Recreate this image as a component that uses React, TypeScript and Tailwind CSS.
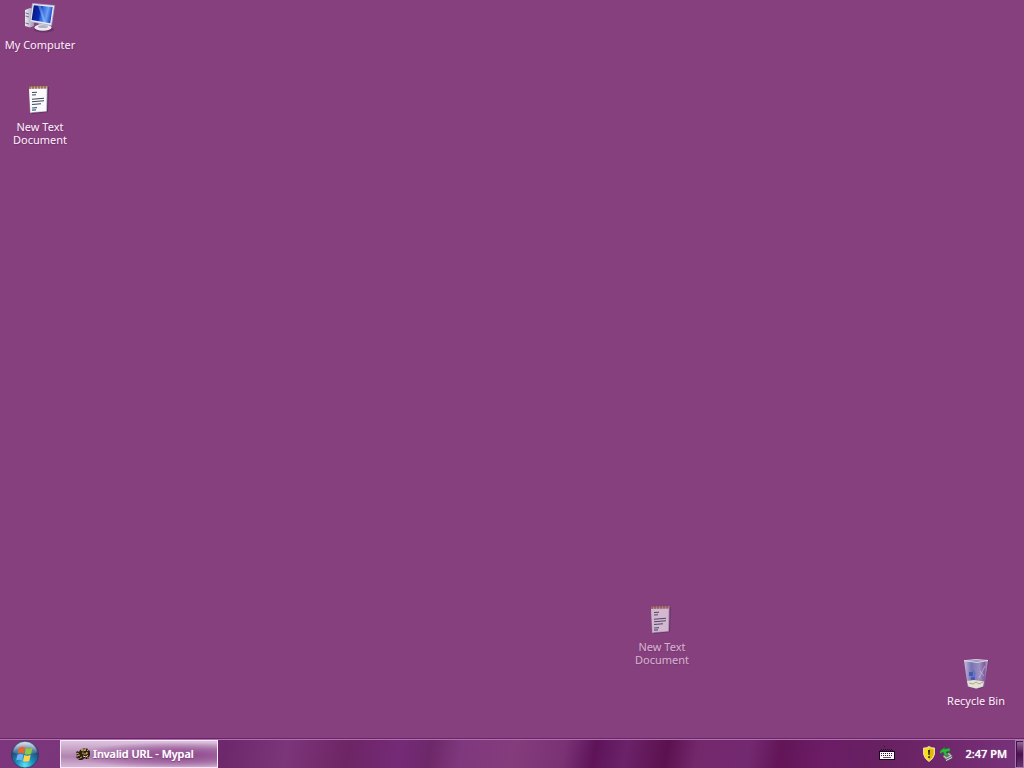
import type { ReactNode } from 'react';

function ComputerIcon() {
  return (
    <svg viewBox="0 0 32 32" className="h-8 w-8" aria-hidden="true">
      <defs>
        <linearGradient id="pcScreen" x1="0" y1="0" x2="1" y2="0.2">
          <stop offset="0" stopColor="#061272" />
          <stop offset="0.45" stopColor="#0a2bb4" />
          <stop offset="0.55" stopColor="#2f68dc" />
          <stop offset="0.8" stopColor="#6ca0f2" />
          <stop offset="1" stopColor="#2450c8" />
        </linearGradient>
        <linearGradient id="pcCase" x1="0" y1="0" x2="1" y2="0">
          <stop offset="0" stopColor="#ebe8f2" />
          <stop offset="1" stopColor="#9f98b0" />
        </linearGradient>
      </defs>
      <path d="M1 8 6 6 10 7V24L6 25.5 1 24Z" fill="url(#pcCase)" />
      <path d="M1.5 11 5 12M1.5 14 5 15M1.5 21 5 22" stroke="#77708c" strokeWidth="1" />
      <ellipse cx="20" cy="27.5" rx="10" ry="3" fill="#4b2454" opacity="0.5" />
      <path d="m15 20 8 2-1 4-8-2Z" fill="#a9a7b9" />
      <ellipse cx="19" cy="25.5" rx="8.5" ry="3.3" fill="#eceaf1" />
      <ellipse cx="19" cy="24.5" rx="5" ry="1.5" fill="#b3b1c1" />
      <path d="M8.500 1.500 30.500 3.500 27.500 23.500 6 19.500Z" fill="#e9ecf6" stroke="#aaa9c2" strokeWidth="0.7" />
      <path d="m9.800 3.200 18.900 1.900-2.500 16.200L7.600 18Z" fill="url(#pcScreen)" />
      <path d="m14 3.700 3 .3 4.500 16.200-2-.3Z" fill="#a9caff" opacity="0.45" />
    </svg>
  );
}

function NotepadIcon() {
  return (
    <svg viewBox="0 0 32 32" className="h-8 w-8" aria-hidden="true">
      <path d="m7 4 18-1-1 25-16 2Z" fill="#451f4c" opacity="0.55" />
      <path d="m5 3 18.500-.5L23 27.500 6 29Z" fill="#bab6c6" />
      <path d="M5 3.500 22.700 3.200l-.7 23.900L6.500 28.300Z" fill="#fbfafe" />
      <path d="m5 2.500 18-.2v2.200L5 4.700Z" fill="#c7a078" />
      <path d="M6 1v4M9 .9v4M12 .8v4M15 .8v4M18 .7v4M21 .7v4" stroke="#7b4b42" strokeWidth="1" />
      <path d="m8 8.500 5-.2M8 11l4-.2M8 15.200l12-1M8 17.800l12-1M8 20.500l9-.8" stroke="#3e4854" strokeWidth="1.1" />
      <path d="m8 24 5-.4M8 26.200l4-.3" stroke="#3c6078" strokeWidth="1.2" />
    </svg>
  );
}

function BinIcon() {
  return (
    <svg viewBox="0 0 32 32" className="h-8 w-8" aria-hidden="true">
      <defs>
        <linearGradient id="binGlass" x1="0" y1="0" x2="1" y2="0">
          <stop offset="0" stopColor="#c8c0e0" />
          <stop offset="0.3" stopColor="#7673b2" />
          <stop offset="0.65" stopColor="#9c8fc2" />
          <stop offset="0.85" stopColor="#805f9c" />
          <stop offset="1" stopColor="#bda8cf" />
        </linearGradient>
      </defs>
      <path d="m5 3 24-1-5 27-4 2-8-1Z" fill="#4a2855" opacity="0.4" />
      <path d="M4 2.500 16 1.500l12 .8L24.400 28.500l-7.900 2.200-8.800-2.200Z" fill="url(#binGlass)" />
      <path d="m7 23 7-1 10 1.500-1 5-7 2-7.500-2Z" fill="#e5e1d6" />
      <path d="m9 25 4 1 3-2 3 2 4-2" stroke="#b6a67a" fill="none" />
      <path d="M9 14h4v4H9ZM11 19h4v3h-4Z" fill="#3450b8" opacity="0.8" />
      <path d="m13 12 2 4-2 4" stroke="#4869ca" strokeWidth="1.3" fill="none" opacity="0.7" />
      <path d="m25 8-6 12M20 13l4 5" stroke="#e2d7f2" strokeWidth="0.9" fill="none" opacity="0.55" />
      <path d="M4 2.700 16 1.500l12 1-11 2Z" fill="#a096b8" stroke="#e5ddef" strokeWidth="0.8" />
    </svg>
  );
}

function StartOrb() {
  return (
    <svg viewBox="0 0 30 30" className="h-[29px] w-[30px]" aria-hidden="true">
      <defs>
        <radialGradient id="orb" cx="0.5" cy="0.9" r="0.85">
          <stop offset="0" stopColor="#5fe6f5" />
          <stop offset="0.35" stopColor="#1c8fbc" />
          <stop offset="0.75" stopColor="#234a78" />
          <stop offset="1" stopColor="#7f9cb8" />
        </radialGradient>
        <linearGradient id="orbShine" x1="0" y1="0" x2="0" y2="1">
          <stop offset="0" stopColor="#fff" stopOpacity="0.7" />
          <stop offset="1" stopColor="#fff" stopOpacity="0.1" />
        </linearGradient>
      </defs>
      <circle cx="15" cy="15" r="14" fill="url(#orb)" stroke="#2e3460" strokeWidth="0.8" />
      <path d="M2.500 13A12.600 12.600 0 0 1 27.500 13Q15 17 2.500 13Z" fill="url(#orbShine)" />
      <path d="M9 8q3.500-2 6-.2L13.700 14q-3-1.500-6.200 0Z" fill="#ed652d" />
      <path d="M16 8.300q3.300 1.500 6.700.1L21.200 14.400q-3.300 1.400-6.600 0Z" fill="#92c83e" />
      <path d="M7.200 15.200q3-1.500 6.200 0L12 21.200q-3-1.500-6.200 0Z" fill="#6cb4f4" />
      <path d="M14.300 15.600q3.300 1.400 6.600 0l-1.500 6q-3.300 1.400-6.500 0Z" fill="#ffd34a" />
    </svg>
  );
}

function MypalIcon() {
  return (
    <svg viewBox="0 0 16 16" className="h-4 w-4 shrink-0" aria-hidden="true">
      <path d="m5 4 4-2 2 1 1-1 1 2 2 1v4l-1 2v2h-3l-1-1-3 2H3l2-2-3 .5L1 11l2-1-2-1 2-1.500L1 7l1-2 2 1Z" fill="#2b2014" />
      <path d="m6 4 3-1 2 1-3 1ZM2 7l2 1M2 10l3-1M5 12l2-1M12 5l1-1M13 11v2" stroke="#d9ae65" strokeWidth="0.9" fill="none" />
      <path d="m7 6 3 1 3-1v2l-3 1-3-1Z" fill="#8f6a38" />
      <path d="M8 10q3 2 5-.500M11 7h1" stroke="#fff1c2" strokeWidth="0.900" fill="none" />
    </svg>
  );
}

function KeyboardIcon() {
  return (
    <svg viewBox="0 0 16 16" className="h-4 w-4" aria-hidden="true">
      <path d="M5.500 0v2M2 3.500h12M1 4.500h13" stroke="#32083c" strokeDasharray="1 1" fill="none" />
      <path d="M0 5h16v9H0Z" fill="#17061b" />
      <path d="M1 6h14v7H1Z" fill="#faf5fc" />
      <path d="M2 7.500h12M2 9.500h12" stroke="#25142b" strokeDasharray="1 1" />
      <path d="M4 11.500h8" stroke="#65566c" />
    </svg>
  );
}

function ShieldIcon() {
  return (
    <svg viewBox="0 0 16 16" className="h-4 w-4" aria-hidden="true">
      <path d="M8 .5Q11 2.500 13.500 2v6q-1 5-5.500 7.500Q3.500 13 2.500 8V2Q5 2.500 8 .5Z" fill="#f9dc25" stroke="#e3dcae" />
      <path d="M8 2q2.500 1.300 4.500 1.200V8q-1 4-4.500 6.200Z" fill="#e1b80c" />
      <path d="M7 4h2l-.4 5H7.400ZM7.200 10.200h1.600v1.700H7.200Z" fill="#27240c" />
    </svg>
  );
}

function HardwareIcon() {
  return (
    <svg viewBox="0 0 16 16" className="h-4 w-4" aria-hidden="true">
      <path d="m4 10 6-4 4 4v2l-6 3.500-3-2.500Z" fill="#55565a" />
      <path d="m4 10 6-3 3 3-6 3Z" fill="#c6c5cb" />
      <path d="m6 10 4-1.500 1 1-3.500 2Z" fill="#696970" />
      <path d="m7 14.500 6-3" stroke="#e6e4e8" />
      <path d="m1 5 5-4-.500 2L11 2v3L7 6l2 3-3 1-2-4-3 2Z" fill="#2fb83c" stroke="#15722a" strokeWidth="0.5" />
    </svg>
  );
}

function DesktopItem({ label, place, dim = false, children }: { label: string; place: string; dim?: boolean; children: ReactNode }) {
  return (
    <button
      type="button"
      className={`absolute flex w-20 flex-col items-center text-center text-[11px] leading-[13px] text-[#fdeefc] ${place} ${dim ? 'opacity-65' : ''}`}
    >
      {children}
      <span className="mt-1 whitespace-pre-line [text-shadow:1px_1px_1px_#75346f]">{label}</span>
    </button>
  );
}

export default function App() {
  return (
    <div className="flex min-h-screen flex-col bg-[#86407d] font-['Noto_Sans','Open_Sans',sans-serif]">
      <main className="relative flex-1 border-b border-[#652663]">
        <DesktopItem label="My Computer" place="left-0 top-[2px]"><ComputerIcon /></DesktopItem>
        <DesktopItem label={'New Text\nDocument'} place="left-0 top-[84px]"><NotepadIcon /></DesktopItem>
        <DesktopItem label={'New Text\nDocument'} place="right-[322px] bottom-[72px]" dim><NotepadIcon /></DesktopItem>
        <DesktopItem label="Recycle Bin" place="right-2 bottom-[31px]"><BinIcon /></DesktopItem>
      </main>

      <footer className="flex h-[29px] items-stretch border-t border-[#b370b4] bg-[linear-gradient(100deg,#7d367d_0%,#783477_15%,#6d286b_22%,#7b3579_28%,#6e2565_34%,#752a77_39%,#6d2869_42%,#7f387d_45%,#853c7d_50%,#7b3275_55%,#5e1359_58%,#6b2269_61%,#5b114f_65%,#74286c_68%,#732970_73%,#631558_76%,#6b1c65_80%,#672161_86%,#70276c_92%,#77347b_100%)] text-white">
        <button type="button" aria-label="Start" className="flex w-[60px] items-center pl-2.5">
          <StartOrb />
        </button>
        <button
          type="button"
          className="flex w-[158px] items-center gap-0.5 border border-[#fae9fa] bg-[radial-gradient(ellipse_at_75%_55%,#8d4288_0%,#a066a0_30%,transparent_65%),linear-gradient(#dcc3de,#b184b1_60%,#d6b5d6)] pl-3.5 text-[11px] font-medium"
        >
          <MypalIcon />
          <span className="whitespace-nowrap [text-shadow:0_0_1px_#fff,0_1px_1px_#6a2c69]">Invalid URL - Mypal</span>
        </button>
        <div className="ml-auto flex items-center">
          <KeyboardIcon />
          <div className="ml-[26px] flex items-center gap-0.5">
            <ShieldIcon />
            <HardwareIcon />
          </div>
          <time className="ml-2.5 text-[11px] font-medium [text-shadow:0_0_1px_#fff]">2:47 PM</time>
        </div>
        <button
          type="button"
          aria-label="Show desktop"
          className="ml-2 w-[9px] border border-[#a579ac] bg-[linear-gradient(#996d9a,#49114e_50%,#6b3573)] shadow-[inset_1px_1px_0_#43104b]"
        />
      </footer>
    </div>
  );
}
